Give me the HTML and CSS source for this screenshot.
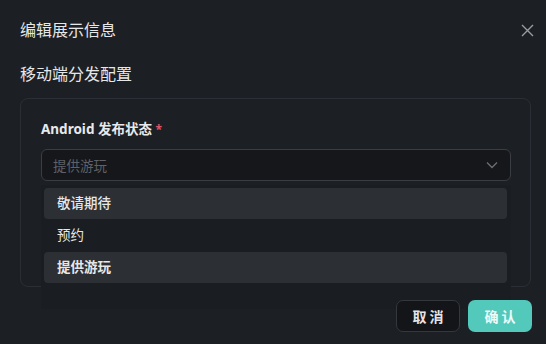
FILE: index.html
```html
<!DOCTYPE html>
<html lang="zh-CN">
<head>
    <meta charset="UTF-8">
    <meta name="viewport" content="width=device-width, initial-scale=1.0">
    <title>编辑展示信息</title>
    <link rel="stylesheet" href="styles.css">
</head>
<body>

    <div class="modal">
        <div class="modal-header">
            <h2 class="modal-title">编辑展示信息</h2>
            <button class="close-btn" aria-label="关闭">
                <svg width="13" height="13" viewBox="0 0 13 13">
                    <path d="M1 1 L12 12 M12 1 L1 12" stroke="#9a9ca0" stroke-width="1.4" fill="none"/>
                </svg>
            </button>
        </div>

        <h3 class="section-title">移动端分发配置</h3>

        <div class="card">
            <label class="field-label">Android 发布状态 <span class="required">*</span></label>
            <div class="select-wrap">
                <div class="select">
                    <span class="placeholder">提供游玩</span>
                    <svg class="chevron" width="12" height="8" viewBox="0 0 12 8">
                        <path d="M1 1.5 L6 6.5 L11 1.5" stroke="#6c6f75" stroke-width="1.3" fill="none"/>
                    </svg>
                </div>
                <ul class="dropdown">
                    <li class="option active">敬请期待</li>
                    <li class="option">预约</li>
                    <li class="option active selected">提供游玩</li>
                </ul>
            </div>
        </div>

        <div class="modal-footer">
            <button class="btn btn-cancel">取 消</button>
            <button class="btn btn-ok">确 认</button>
        </div>
    </div>

</body>
</html>
```

FILE: styles.css
```css
* {
    box-sizing: border-box;
}

body {
    margin: 0;
    padding: 0;
    width: 546px;
    height: 344px;
    overflow: hidden;
    background: #1c1f24;
    color: #e4e5e7;
    font-family: 'Noto Sans', 'Noto Sans CJK SC', sans-serif;
}

.modal {
    display: flex;
    flex-direction: column;
    padding-top: 19px;
}

.modal-header {
    display: flex;
    justify-content: space-between;
    align-items: center;
    padding: 0 12px 0 20px;
    height: 22px;
}

.modal-title,
.section-title {
    margin: 0;
    font-size: 16px;
    line-height: 22px;
    font-weight: 400;
    color: #e6e7e9;
}

.section-title {
    margin: 22px 0 13px 20px;
}

.close-btn {
    background: none;
    border: none;
    padding: 0;
    width: 13px;
    height: 13px;
    display: flex;
    cursor: pointer;
}

.card {
    margin: 0 15px 0 20px;
    height: 189px;
    border: 1px solid #2b2e34;
    border-radius: 8px;
    padding: 20px 19px 0 20px;
}

.field-label {
    display: block;
    font-size: 13.5px;
    line-height: 20px;
    font-weight: 700;
    color: #e8e9eb;
}

.required {
    color: #e0546a;
    font-size: 12px;
}

.select-wrap {
    position: relative;
    margin-top: 9px;
}

.select {
    height: 32px;
    border: 1px solid #3a3d43;
    border-radius: 6px;
    background: #15171b;
    display: flex;
    align-items: center;
    justify-content: space-between;
    padding: 0 12px 0 11px;
}

.placeholder {
    font-size: 13.5px;
    color: #5e6167;
}

.dropdown {
    position: absolute;
    top: 36px;
    left: 0;
    right: 0;
    height: 124px;
    margin: 0;
    padding: 3px 4px 0 3px;
    list-style: none;
    background: #1a1d22;
    display: flex;
    flex-direction: column;
    gap: 1px;
    z-index: 2;
}

.option {
    height: 31px;
    line-height: 31px;
    padding-left: 13px;
    font-size: 13.5px;
    color: #e6e7e9;
    border-radius: 4px;
}

.option.active {
    background: #2c2f34;
    font-weight: 500;
}

.option.selected {
    font-weight: 700;
}

.modal-footer {
    position: relative;
    z-index: 3;
    display: flex;
    justify-content: flex-end;
    gap: 8px;
    padding-right: 14px;
    margin-top: 13px;
}

.btn {
    height: 32px;
    width: 64px;
    border-radius: 7px;
    font-family: 'Noto Sans CJK SC', sans-serif;
    font-size: 14px;
    font-weight: 700;
    cursor: pointer;
}

.btn-cancel {
    background: #131519;
    border: 1px solid #34373c;
    color: #e4e5e7;
}

.btn-ok {
    background: #52c9bb;
    border: none;
    color: #eefaf8;
}
```
